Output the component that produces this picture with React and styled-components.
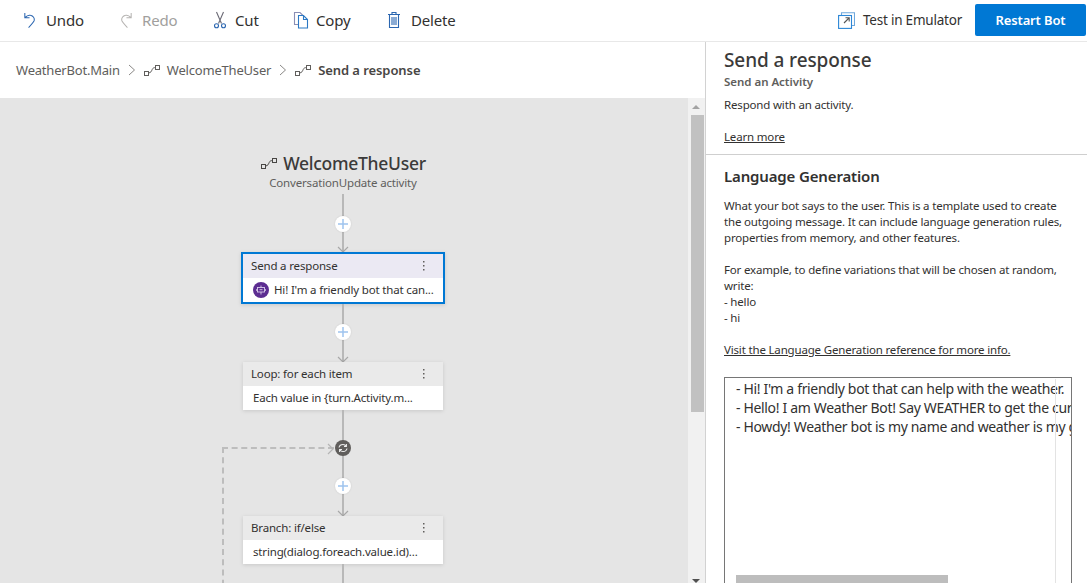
import React from "react";
import styled, { createGlobalStyle } from "styled-components";

const Global = createGlobalStyle`
  html, body { margin: 0; padding: 0; height: 583px; overflow: hidden; background: #fff; }
  * { box-sizing: border-box; }
  body { font-family: "Noto Sans", "Open Sans", sans-serif; color: #323130; }
`;

const Page = styled.div`
  width: 1087px; height: 583px; display: flex; flex-direction: column; overflow: hidden;
`;
const Toolbar = styled.header`
  height: 42px; flex: none; display: flex; align-items: center; justify-content: space-between;
  border-bottom: 1px solid #e8e8e8; padding: 0 1px 1px 22px;
`;
const ToolGroup = styled.div`display: flex; align-items: center;`;
const ToolButton = styled.div`
  display: flex; align-items: center; gap: ${p => p.$gap || 8}px; width: ${p => p.$w}px; flex: none;
  font-size: 15px; letter-spacing: -0.16px; line-height: 18px; padding-bottom: 1px;
  color: ${p => p.$off ? "#a19f9d" : "#323130"};
  svg { flex: none; }
`;
const EmulatorLink = styled.div`
  display: flex; align-items: center; gap: 8px; font-size: 13.5px; letter-spacing: -0.22px; color: #323130;
`;
const Restart = styled.div`
  width: 111px; height: 32px; background: #0078d4; color: #fff; border-radius: 2px;
  display: flex; align-items: center; justify-content: center;
  font-size: 13px; font-weight: 600; letter-spacing: -0.13px;
  margin-left: 13px;
`;
const Body = styled.div`flex: 1; display: flex; min-height: 0;`;
const Left = styled.main`width: 705px; flex: none; display: flex; flex-direction: column;`;
const Crumbs = styled.nav`
  height: 56px; flex: none; display: flex; align-items: center; padding: 0 0 0 16px;
  font-size: 13px; letter-spacing: -0.2px; color: #605e5c;
`;
const Crumb = styled.span`
  display: flex; align-items: center; gap: 6px;
  font-weight: ${p => p.$strong ? 600 : 400};
  letter-spacing: ${p => p.$strong ? "-0.08px" : "inherit"};
  color: ${p => p.$strong ? "#484644" : "#605e5c"};
`;
const Chevron = styled.svg`margin: 0 7px 0 8px; flex: none;`;
const CanvasRow = styled.div`flex: 1; display: flex; min-height: 0;`;
const Canvas = styled.div`
  width: 688px; flex: none; background: #e5e5e5; position: relative; overflow: hidden;
  display: flex; flex-direction: column; align-items: center;
  padding: 54px 2px 0 0;
`;
const Track = styled.div`
  width: 17px; flex: none; background: #f1f1f1; display: flex; flex-direction: column; align-items: center;
  position: relative; padding-left: 1px;
`;
const Thumb = styled.div`width: 13px; height: 297px; background: #c1c1c1; margin-top: 17px;`;
const Arrow = styled.div`
  position: absolute; left: 4px; width: 0; height: 0;
  border-left: 4px solid transparent; border-right: 4px solid transparent;
  ${p => p.$down ? "bottom: 0; border-top: 4px solid #505050;" : "top: 7px; border-bottom: 4px solid #a3a3a3;"}
`;
const Heading = styled.div`
  display: flex; align-items: center; justify-content: center; gap: 5px;
  font-size: 17.5px; font-weight: 500; line-height: 22px; color: #3b3a39; letter-spacing: -0.27px;
  height: 22px;
`;
const Sub = styled.div`
  font-size: 11.5px; line-height: 16px; color: #605e5c; letter-spacing: -0.17px; height: 16px; margin-top: 1px;
`;
const Edge = styled.div`
  width: 2px; background: #b8b8b8; height: ${p => p.$h}px; position: relative; flex: none;
  display: flex; justify-content: center; margin-top: ${p => p.$mt || 0}px;
`;
const Plus = styled.div`
  position: absolute; top: ${p => p.$top}px; left: -7px; width: 16px; height: 16px; border-radius: 50%;
  background: #fff; display: flex; align-items: center; justify-content: center;
  box-shadow: 0 0 2px rgba(0,0,0,.12);
`;
const Loop = styled(Plus)`background: #605e5c; box-shadow: none;`;
const ArrowHead = styled.svg`position: absolute; bottom: -1px; left: -5px;`;
const Card = styled.div`
  width: ${p => p.$active ? 204 : 200}px; height: ${p => p.$active ? 52 : 48}px; flex: none;
  background: #fff; box-shadow: 0 1px 4px rgba(0,0,0,.13);
  ${p => p.$active && "border: 2px solid #0078d4;"}
  display: flex; flex-direction: column; position: relative;
`;
const CardHead = styled.div`
  height: 24px; flex: none; background: ${p => p.$active ? "#ebe9f3" : "#eaeaea"};
  display: flex; align-items: center; justify-content: space-between; padding: 0 18px 2px 8px;
  font-size: 11.5px; letter-spacing: -0.17px; color: #323130;
`;
const Dots = styled.svg`flex: none; margin-top: 2px;`;
const CardBody = styled.div`
  flex: 1; display: flex; align-items: center; gap: 5px; padding: 0 0 1px 10px;
  font-size: 11.5px; letter-spacing: -0.17px; color: #323130; white-space: nowrap; overflow: hidden;
`;
const BotBadge = styled.div`
  width: 16px; height: 16px; border-radius: 50%; background: #5c2d91; flex: none;
  display: flex; align-items: center; justify-content: center;
`;
const DashedLoop = styled.div`
  position: absolute; left: 222px; top: 349px; width: 112px; height: 200px;
  border-left: 2px dashed #bdbdbd; border-top: 2px dashed #bdbdbd;
`;
const DashedHead = styled.svg`position: absolute; left: 327px; top: 345px;`;

const Panel = styled.aside`
  flex: 1; border-left: 1px solid #d2d2d2; display: flex; flex-direction: column; min-width: 0;
`;
const PanelTop = styled.section`
  height: 113px; flex: none; padding: 5px 18px 0; border-bottom: 1px solid #cfcfcf;
`;
const Title = styled.h1`
  margin: 0; font-size: 19px; font-weight: 500; line-height: 26px; letter-spacing: -0.1px; color: #3b3a39;
`;
const Small = styled.div`
  font-size: 11.5px; line-height: 16px; letter-spacing: -0.03px; color: #605e5c; font-weight: 600; margin-top: 1px;
`;
const Para = styled.p`
  margin: ${p => p.$mt || 0}px 0 0; font-size: 11.5px; line-height: 16px; letter-spacing: -0.17px; color: #323130;
  white-space: pre-line;
`;
const DocLink = styled.a`
  display: block; margin-top: ${p => p.$mt}px; font-size: 11.5px; line-height: 16px; letter-spacing: -0.17px;
  color: #323130; text-decoration: underline;
`;
const PanelBody = styled.section`padding: 11px 15px 0 18px; flex: 1; min-height: 0;`;
const SectionTitle = styled.h2`
  margin: 0; font-size: 15px; font-weight: 600; line-height: 20px; letter-spacing: -0.15px; color: #323130;
`;
const Editor = styled.div`
  margin-top: 19px; height: 300px; border: 1px solid #767676; position: relative; overflow: hidden;
  padding: 1px 0 0 11px; font-size: 14px; line-height: 19px; letter-spacing: -0.34px; color: #323130;
  white-space: nowrap;
`;
const Minimap = styled.div`
  position: absolute; right: 15px; top: 1px; bottom: 0; width: 1px; background: #e3e3e3;
`;
const HScroll = styled.div`
  position: absolute; left: 11px; top: 197px; width: 212px; height: 8px; background: #bdbdbd;
`;

const Connector = ({ c = "#605e5c" }) => (
  <svg width="18" height="15" viewBox="0 0 18 15" fill="none" stroke={c} strokeWidth="1">
    <rect x="1.5" y="8.5" width="4" height="4" />
    <rect x="12.5" y="2.5" width="4" height="4" />
    <path d="M5.5 10c2.5-.3 2.8-1.6 3.7-3.5S10.800 4.800 12.500 4.500" />
  </svg>
);
const PlusIcon = () => (
  <svg width="10" height="10" viewBox="0 0 10 10" stroke="#9fc4ee" strokeWidth="1.5"><path d="M5 0v10M0 5h10" /></svg>
);
const Head = () => (
  <ArrowHead width="12" height="7" viewBox="0 0 12 7" fill="none" stroke="#a8a8a8" strokeWidth="1.2"><path d="M1 1l5 5 5-5" /></ArrowHead>
);
const More = () => (
  <Dots width="3" height="12" viewBox="0 0 3 12" fill="#605e5c"><rect x="1" y="1" width="1.500" height="1.500" /><rect x="1" y="5" width="1.500" height="1.500" /><rect x="1" y="9" width="1.500" height="1.500" /></Dots>
);

export default function App() {
  return (
    <Page>
      <Global />
      <Toolbar>
        <ToolGroup>
          <ToolButton $w={96}>
            <svg width="16" height="18" viewBox="0 0 17 18" fill="none" stroke="#2b66b0" strokeWidth="1.1"><path d="M3 1.500v5h5M3.200 6.500C5 4.500 7 3.500 9 4c3 .6 4.500 3.200 4 5.500-.5 2-2 3.500-6 7.500" /></svg>
            <span>Undo</span>
          </ToolButton>
          <ToolButton $w={95} $off>
            <svg width="16" height="18" viewBox="0 0 17 18" fill="none" stroke="#b5b3b1" strokeWidth="1.1"><path d="M14 1.500v5H9M13.800 6.500C12 4.500 10 3.500 8 4 5 4.600 3.500 7.200 4 9.500c.5 2 2 3.500 6 7.500" /></svg>
            <span>Redo</span>
          </ToolButton>
          <ToolButton $w={80}>
            <svg width="14" height="18" viewBox="0 0 14 18" fill="none" stroke="#2b66b0" strokeWidth="1.1"><path d="M3.500 1l5 11.500M10.500 1l-5 11.500" stroke="#6b6a75" /><circle cx="3.500" cy="14.800" r="2" /><circle cx="10.500" cy="14.800" r="2" /></svg>
            <span>Cut</span>
          </ToolButton>
          <ToolButton $w={94} $gap={7}>
            <svg width="16" height="18" viewBox="0 0 16 18" fill="none" stroke="#2b78c4" strokeWidth="1.1"><path d="M5 13.500H1.500v-12H7L10 4.500" stroke="#8a8fb5" /><path d="M5.500 4.500h5l4 4v8.500h-9zM10.500 4.500v4h4" /></svg>
            <span>Copy</span>
          </ToolButton>
          <ToolButton $gap={10}>
            <svg width="14" height="18" viewBox="0 0 14 18" fill="none" stroke="#2b66b0" strokeWidth="1.1"><path d="M1 3.500h12M5 3.500v-2h4v2M2.500 3.500v13h9v-13M5 6v8M7 6v8M9 6v8" /></svg>
            <span>Delete</span>
          </ToolButton>
        </ToolGroup>
        <ToolGroup>
          <EmulatorLink>
            <svg width="17" height="17" viewBox="0 0 17 17" fill="none" stroke="#2b86d6" strokeWidth="1.1"><path d="M3.500 3.500V.8h13v12.700h-3" stroke="#6fa8dc" /><rect x=".6" y="3.500" width="12.900" height="12.900" /><path d="M6 11l5-5M7.500 5.800h3.700v3.700" stroke="#555" /></svg>
            <span>Test in Emulator</span>
          </EmulatorLink>
          <Restart>Restart Bot</Restart>
        </ToolGroup>
      </Toolbar>
      <Body>
        <Left>
          <Crumbs>
            <Crumb>WeatherBot.Main</Crumb>
            <Chevron width="8" height="12" viewBox="0 0 8 12" fill="none" stroke="#8a8886"><path d="M1 1l5.500 5L1 11" /></Chevron>
            <Crumb><Connector c="#605e5c" />WelcomeTheUser</Crumb>
            <Chevron width="8" height="12" viewBox="0 0 8 12" fill="none" stroke="#8a8886"><path d="M1 1l5.500 5L1 11" /></Chevron>
            <Crumb $strong><Connector c="#605e5c" />Send a response</Crumb>
          </Crumbs>
          <CanvasRow>
            <Canvas>
              <Heading><Connector c="#484644" />WelcomeTheUser</Heading>
              <Sub>ConversationUpdate activity</Sub>
              <Edge $h={58} $mt={3}><Plus $top={22}><PlusIcon /></Plus><Head /></Edge>
              <Card $active>
                <CardHead $active>Send a response<More /></CardHead>
                <CardBody $active>
                  <BotBadge>
                    <svg width="10" height="10" viewBox="0 0 10 10" fill="none" stroke="#d9cdea" strokeWidth=".9"><rect x="1.500" y="2.500" width="7" height="4.500" /><path d="M5 .5v2M5 7v2.500M3.500 4.700h3M.3 4v2M9.700 4v2" /></svg>
                  </BotBadge>
                  <span>Hi! I'm a friendly bot that can...</span>
                </CardBody>
              </Card>
              <Edge $h={58}><Plus $top={20}><PlusIcon /></Plus><Head /></Edge>
              <Card>
                <CardHead>Loop: for each item<More /></CardHead>
                <CardBody>Each value in {"{"}turn.Activity.m...</CardBody>
              </Card>
              <Edge $h={106}>
                <Loop $top={30}>
                  <svg width="10" height="10" viewBox="0 0 10 10" fill="none" stroke="#eee" strokeWidth="1.1"><path d="M1 4.500c.4-2 2-3 4-3 1.300 0 2.400.6 3.200 1.800M8.400 1v2.500H6M9 5.500c-.4 2-2 3-4 3-1.300 0-2.400-.6-3.200-1.800M1.600 9V6.500H4" /></svg>
                </Loop>
                <Plus $top={68}><PlusIcon /></Plus>
                <Head />
              </Edge>
              <Card>
                <CardHead>Branch: if/else<More /></CardHead>
                <CardBody>string(dialog.foreach.value.id)...</CardBody>
              </Card>
              <Edge $h={40} />
              <DashedLoop />
              <DashedHead width="8" height="12" viewBox="0 0 8 12" fill="none" stroke="#b5b5b5" strokeWidth="1.2"><path d="M1 1l5 5-5 5" /></DashedHead>
            </Canvas>
            <Track>
              <Arrow />
              <Thumb />
              <Arrow $down />
            </Track>
          </CanvasRow>
        </Left>
        <Panel>
          <PanelTop>
            <Title>Send a response</Title>
            <Small>Send an Activity</Small>
            <Para $mt={7}>Respond with an activity.</Para>
            <DocLink $mt={16}>Learn more</DocLink>
          </PanelTop>
          <PanelBody>
            <SectionTitle>Language Generation</SectionTitle>
            <Para $mt={12}>{"What your bot says to the user. This is a template used to create\nthe outgoing message. It can include language generation rules,\nproperties from memory, and other features.\n\nFor example, to define variations that will be chosen at random,\nwrite:\n- hello\n- hi"}</Para>
            <DocLink $mt={16}>Visit the Language Generation reference for more info.</DocLink>
            <Editor>
              <div>- Hi! I'm a friendly bot that can help with the weather.</div>
              <div>- Hello! I am Weather Bot! Say WEATHER to get the current weather.</div>
              <div>- Howdy! Weather bot is my name and weather is my game.</div>
              <Minimap />
              <HScroll />
            </Editor>
          </PanelBody>
        </Panel>
      </Body>
    </Page>
  );
}
